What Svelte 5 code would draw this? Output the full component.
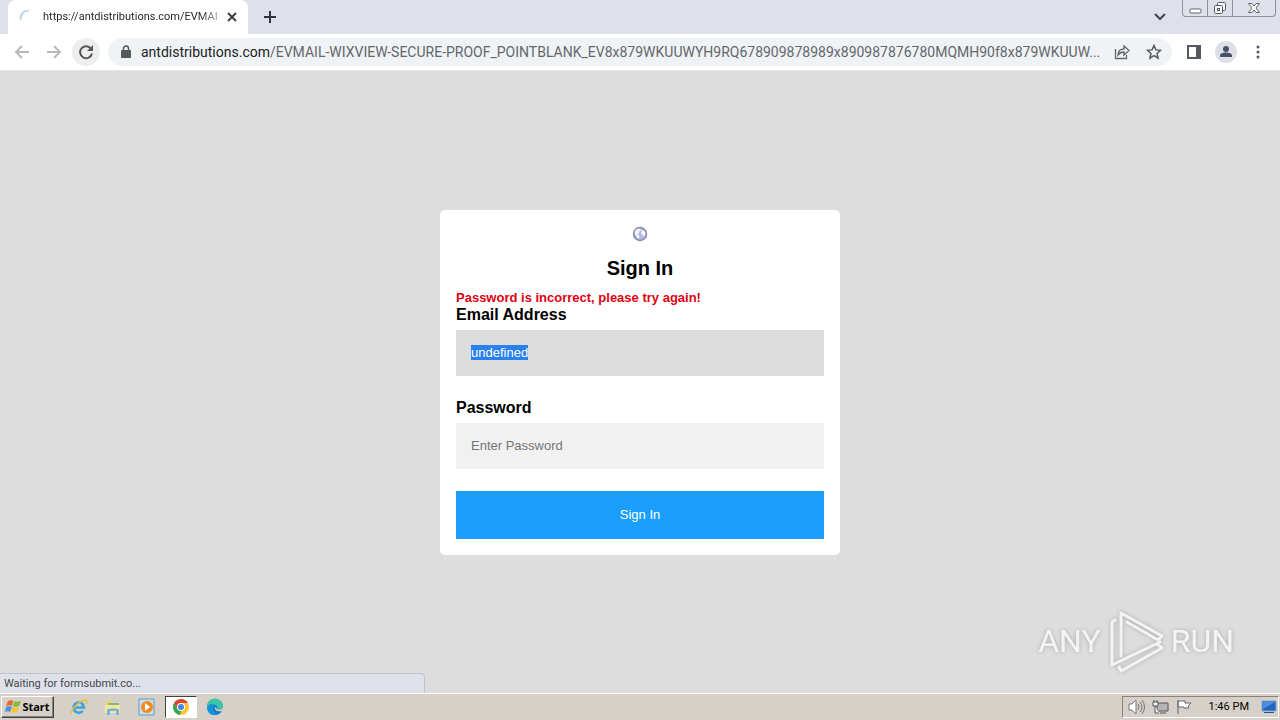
<script>
  import { onMount } from 'svelte';

  let email = 'undefined';
  let password = '';
  let emailInput;

  const host = 'antdistributions.com';
  const path = '/EVMAIL-WIXVIEW-SECURE-PROOF_POINTBLANK_EV8x879WKUUWYH9RQ678909878989x890987876780MQMH90f8x879WKUUW...';

  onMount(() => {
    emailInput.focus();
    emailInput.select();
  });
</script>

<div class="screen">
  <header class="tabs">
    <div class="tab">
      <svg class="spinner" width="16" height="16" viewBox="0 0 16 16"><path d="M3 11A7 7 0 0 1 11 2" fill="none" stroke="#c3d2f5" stroke-width="2" /></svg>
      <span class="tab-title">https://{host}/EVMAIL</span>
      <button class="tab-close" aria-label="Close tab">
        <svg width="10" height="10" viewBox="0 0 10 10"><path d="M1 1l8 8M9 1l-8 8" stroke="#3c4043" stroke-width="2" /></svg>
      </button>
    </div>
    <button class="new-tab" aria-label="New tab">
      <svg width="14" height="14" viewBox="0 0 14 14"><path d="M7 1v12M1 7h12" stroke="#303238" stroke-width="2" /></svg>
    </button>
    <button class="tab-search" aria-label="Search tabs">
      <svg width="12" height="8" viewBox="0 0 12 8"><path d="M1 1l5 5 5-5" fill="none" stroke="#45484e" stroke-width="2" /></svg>
    </button>
    <div class="window-buttons">
      <button aria-label="Minimize">
        <svg width="13" height="13" viewBox="0 0 13 13"><rect x="1" y="7" width="11" height="4" rx="1" fill="#fff" stroke="#62666e" /></svg>
      </button>
      <button aria-label="Restore">
        <svg width="14" height="14" viewBox="0 0 14 14" fill="#f5f6f8" stroke="#555961"><rect x="4.500" y="1.500" width="8" height="8" rx="1" /><rect x="1.500" y="4.500" width="8" height="8" rx="1" /><rect x="4.500" y="7.500" width="2" height="2" /></svg>
      </button>
      <button class="wide" aria-label="Close">
        <svg width="14" height="12" viewBox="0 0 14 12"><path d="M1.500 1.500H5L7 4l2-2.500h3.500L9 6l3.500 4.500H9L7 8l-2 2.500H1.500L5 6z" fill="#fff" stroke="#62666e" /></svg>
      </button>
    </div>
  </header>

  <nav class="toolbar">
    <button class="nav-button" aria-label="Back">
      <svg width="16" height="16" viewBox="0 0 16 16"><path d="M15 8H2M8 2L2 8l6 6" fill="none" stroke="#b7b9bc" stroke-width="2" /></svg>
    </button>
    <button class="nav-button" aria-label="Forward">
      <svg width="16" height="16" viewBox="0 0 16 16"><path d="M1 8h13M8 2l6 6-6 6" fill="none" stroke="#b7b9bc" stroke-width="2" /></svg>
    </button>
    <button class="nav-button reload" aria-label="Reload">
      <svg width="16" height="16" viewBox="0 0 16 16"><path d="M13.200 5A6 6 0 1 0 14 9.500" fill="none" stroke="#55585d" stroke-width="2" /><path d="M15 1v6H9z" fill="#55585d" /></svg>
    </button>
    <div class="address">
      <svg class="lock" width="10" height="14" viewBox="0 0 10 14"><rect y="5" width="10" height="8" rx="1" fill="#55585d" /><path d="M2.500 6V3.500a2.500 2.500 0 0 1 5 0V6" fill="none" stroke="#55585d" stroke-width="1.500" /></svg>
      <span class="url"><b>{host}</b>{path}</span>
      <button aria-label="Share">
        <svg width="16" height="16" viewBox="0 0 16 16" fill="none" stroke="#62666b" stroke-width="1.300"><path d="M1.500 5v9.500h11V11" /><path d="M4 11c.3-4 2.500-6 6-6V2l5 4.500-5 4.500V8C7.500 8 5.500 9 4 11z" /></svg>
      </button>
      <button aria-label="Bookmark">
        <svg width="16" height="16" viewBox="0 0 16 16"><path d="M8 1.500l1.900 4.400 4.700.4-3.600 3.100 1.100 4.700L8 11.600l-4.100 2.500L5 9.400 1.400 6.300l4.700-.4z" fill="none" stroke="#55585d" stroke-width="1.500" /></svg>
      </button>
    </div>
    <div class="actions">
      <button aria-label="Side panel">
        <svg width="14" height="14" viewBox="0 0 14 14"><path d="M1 1h12v12H1z" fill="none" stroke="#55585d" stroke-width="2" /><path d="M9 1h4v12H9z" fill="#55585d" /></svg>
      </button>
      <button aria-label="Profile">
        <svg width="22" height="22" viewBox="0 0 22 22"><circle cx="11" cy="11" r="11" fill="#dde0e6" /><circle cx="11" cy="8" r="3" fill="#46516b" /><path d="M5 16v-1.500c0-2 3-3 6-3s6 1 6 3V16z" fill="#46516b" /></svg>
      </button>
      <button aria-label="Menu">
        <svg width="4" height="14" viewBox="0 0 4 14" fill="#55585d"><circle cx="2" cy="2" r="1.500" /><circle cx="2" cy="7" r="1.500" /><circle cx="2" cy="12" r="1.500" /></svg>
      </button>
    </div>
  </nav>

  <main class="page">
    <form class="card" on:submit|preventDefault>
      <svg class="globe" width="16" height="16" viewBox="0 0 16 16"><circle cx="8" cy="8" r="6.500" fill="#b3badf" stroke="#8188aa" stroke-width="1.400" /><path d="M3 5l2-2 3-.5 1 1.500-1.500 1L7 7 5 8l2 1 .5 2L6 13 4.500 10 3 8zM10 4l2 .5L13.500 7 12 11l-1-2-1.500-1L9 6z" fill="#f6f8ff" /></svg>
      <h2>Sign In</h2>
      <p class="error">Password is incorrect, please try again!</p>
      <label for="email">Email Address</label>
      <input id="email" class="email" type="text" bind:this={emailInput} bind:value={email} readonly />
      <label for="password">Password</label>
      <input id="password" type="password" placeholder="Enter Password" bind:value={password} />
      <button class="submit" type="submit">Sign In</button>
    </form>

    <div class="status">Waiting for formsubmit.co...</div>

    <div class="watermark">
      <span>ANY</span>
      <svg width="58" height="64" viewBox="0 0 58 64" fill="none" stroke="#f4f4f4" stroke-width="3" stroke-linejoin="round" stroke-linecap="round"><path d="M8 11L5 13V56L53 33" /><path d="M14 47V4L55 27L51 31L20 13M12 58L14 62L55 39L50 35" /></svg>
      <span>RUN</span>
    </div>
  </main>

  <footer class="taskbar">
    <button class="start">
      <svg width="17" height="16" viewBox="0 0 17 16"><path d="M3 2c2-1 4-1 5 0L7 7C5 6 4 6 1 7z" fill="#e8642c" /><path d="M9 2c2 1 4 1 7 0l-2 5c-2 1-4 1-6 0z" fill="#83bd3b" /><path d="M1 8c2-1 4-1 6 0l-2 5c-1-1-3-1-5 0z" fill="#4b91dc" /><path d="M8 8c2 1 4 1 6 0l-2 5c-2 1-4 1-6 0z" fill="#f7c331" /></svg>
      Start
    </button>
    <div class="apps">
      <button aria-label="Internet Explorer">
        <svg width="18" height="18" viewBox="0 0 18 18" fill="none"><path d="M4.500 9.500h9.500A5.200 5.200 0 1 0 12.800 13" stroke="#37a5e0" stroke-width="2.600" /><path d="M2 15C-1 16 6 4 15 2c3-.5 2 2 1 4" stroke="#edbd3d" stroke-width="1.500" /></svg>
      </button>
      <button aria-label="Explorer">
        <svg width="18" height="18" viewBox="0 0 18 18"><path d="M2 3h6l1 2h6v10H2z" fill="#efd272" /><path d="M4 5h11v3H4z" fill="#80bd76" /><path d="M1 7h15v8H1z" fill="#f8e69c" /><path d="M3 17v-5c0-2 12-2 12 0v5h-3v-4H6v4z" fill="#74b5dc" /></svg>
      </button>
      <button aria-label="Media Player">
        <svg width="18" height="18" viewBox="0 0 18 18"><path d="M1 1h15v16H1z" fill="#c7def2" stroke="#669ac6" /><circle cx="9" cy="9" r="6" fill="#f38b20" /><path d="M7 5l5 4-5 4z" fill="#fff" /></svg>
      </button>
      <button class="active" aria-label="Chrome">
        <svg width="18" height="18" viewBox="0 0 18 18"><circle cx="9" cy="9" r="8" fill="#f9c52e" /><path d="M2.100 5A8 8 0 0 1 15.900 5H9L5.500 11z" fill="#df4334" /><path d="M2.100 5L5.600 11 9 13l-1 4A8 8 0 0 1 2.100 5z" fill="#33a452" /><circle cx="9" cy="9" r="4" fill="#fff" /><circle cx="9" cy="9" r="3" fill="#4285e8" /></svg>
      </button>
      <button aria-label="Edge">
        <svg width="18" height="18" viewBox="0 0 18 18"><circle cx="9" cy="9" r="8" fill="#1679c7" /><path d="M1 9a8 8 0 0 1 16-1c0 4-4 4-6 3 2-4-5-7-10-2z" fill="#3bc4a6" /><path d="M1 9c3-4 8-3 8 0-3 1-2 6 3 7-6 3-11-1-11-7z" fill="#1593d8" /><path d="M9 9c-1 4 4 5 7 4l2-3-1-1c-1 3-4 3-6 2z" fill="#d6d0c8" /></svg>
      </button>
    </div>
    <div class="tray">
      <svg width="17" height="16" viewBox="0 0 17 16" fill="#fff" stroke="#77757a"><path d="M1 5h3l4-4v14l-4-4H1z" /><path d="M10 5q2 3 0 6M12 3q4 5 0 10M14 1q5 7 0 14" fill="none" /></svg>
      <svg width="17" height="16" viewBox="0 0 17 16" fill="#f4f4f4" stroke="#55545a"><path d="M5 4h11v8H5z" fill="#b6b5b5" /><path d="M8 14h6M2 1v2M5 1v2M1 3h5v4H1zM3 7v7h4" /></svg>
      <svg width="17" height="16" viewBox="0 0 17 16" fill="#fff" stroke="#66646a"><path d="M2 1v14M2 2h7v2h6l-3 3 1 2H8V8H2z" /></svg>
      <time>1:46 PM</time>
      <svg width="16" height="16" viewBox="0 0 16 16"><path d="M1 2h14v10H1z" fill="#2465bd" stroke="#7ba6d7" /><path d="M2 3h12L2 10z" fill="#4a8edc" /><path d="M3 13h10v1H3z" fill="#34527d" /></svg>
    </div>
  </footer>
</div>

<style>
  :global(body) {
    margin: 0;
  }

  .screen {
    display: flex;
    flex-direction: column;
    min-height: 100vh;
    font: 11px/14px "Roboto", sans-serif;
    color: #25272b;
  }
  .screen, .screen * {
    box-sizing: border-box;
  }
  button {
    display: flex;
    align-items: center;
    justify-content: center;
    flex-shrink: 0;
    padding: 0;
    border: 0;
    background: none;
    font: inherit;
    color: inherit;
  }
  svg {
    display: block;
    flex-shrink: 0;
  }

  .tabs {
    display: flex;
    height: 34px;
    padding: 0 4px 0 8px;
    background: #dee1e9;
  }
  .tab {
    display: flex;
    align-items: center;
    width: 240px;
    padding: 0 10px;
    border-radius: 8px 8px 0 0;
    background: #fff;
  }
  .tab-title {
    flex: 1;
    margin-left: 9px;
    overflow: hidden;
    white-space: nowrap;
    mask-image: linear-gradient(to right, #000 155px, transparent 190px);
  }
  .tab-close {
    width: 12px;
    margin-left: 8px;
  }
  .new-tab {
    width: 44px;
  }
  .tab-search {
    width: 24px;
    margin-left: auto;
    margin-right: 10px;
  }
  .window-buttons {
    display: flex;
    height: 17px;
    border: 1px solid #8d919a;
    border-top: 0;
    border-radius: 0 0 4px 4px;
  }
  .window-buttons button {
    width: 25px;
    border-right: 1px solid #8d919a;
  }
  .window-buttons .wide {
    width: 42px;
    border-right: 0;
  }

  .toolbar {
    display: flex;
    align-items: center;
    height: 37px;
    padding: 0 12px 0 8px;
    border-bottom: 1px solid #e5e5e5;
    background: #fff;
  }
  .nav-button {
    width: 28px;
    height: 28px;
    margin-right: 4px;
    border-radius: 50%;
  }
  .reload {
    margin-right: 8px;
    background: #eee;
  }
  .address {
    display: flex;
    align-items: center;
    flex: 1;
    min-width: 0;
    height: 28px;
    padding: 0 10px 0 13px;
    border-radius: 14px;
    background: #f0f3f6;
  }
  .address button {
    margin-left: 16px;
  }
  .address .url + button {
    margin-left: 12px;
  }
  .url {
    flex: 1;
    margin-left: 10px;
    overflow: hidden;
    font-size: 14px;
    line-height: 20px;
    text-overflow: ellipsis;
    white-space: nowrap;
    color: #63676c;
  }
  .url b {
    font-weight: 400;
    color: #202124;
  }
  .actions {
    display: flex;
    align-items: center;
    gap: 14px;
    padding: 0 8px 0 15px;
  }
  .actions button:last-child {
    margin-left: 5px;
  }

  .page {
    position: relative;
    display: flex;
    align-items: center;
    justify-content: center;
    flex: 1;
    background: #ddd;
    font-family: "Liberation Sans", Arial, sans-serif;
    color: #000;
  }
  .card {
    width: 400px;
    max-width: 100%;
    padding: 16px;
    border-radius: 5px;
    background: #fff;
  }
  .globe {
    margin: 0 auto;
  }
  h2 {
    margin: 14px 0 10px;
    font-size: 20px;
    line-height: 24px;
    text-align: center;
  }
  .error {
    margin: 0;
    font-size: 13px;
    font-weight: 700;
    line-height: 16px;
    color: #e00012;
  }
  label {
    display: block;
    font-size: 16px;
    font-weight: 700;
    line-height: 18px;
  }
  input {
    display: block;
    width: 100%;
    height: 46px;
    margin: 6px 0 22px;
    padding: 15px;
    border: 0;
    border-radius: 0;
    outline: none;
    background: #f1f1f1;
    font: 13px/16px "Liberation Sans", Arial, sans-serif;
  }
  .email {
    margin-bottom: 23px;
    background: #ddd;
  }
  input::selection {
    background: #2a80ee;
    color: #fff;
  }
  input::placeholder {
    color: #757575;
  }
  .submit {
    width: 100%;
    height: 48px;
    background: #1a9fff;
    font-size: 13px;
    color: #fff;
  }

  .status {
    position: absolute;
    left: 0;
    bottom: 0;
    width: 425px;
    padding: 3px 4px 2px;
    border: 1px solid #bfc3cc;
    border-width: 1px 1px 0 0;
    border-radius: 0 4px 0 0;
    background: #dee1e9;
    font-family: "Roboto", sans-serif;
    color: #44474c;
  }
  .watermark {
    position: absolute;
    right: 46px;
    bottom: 20px;
    display: flex;
    align-items: center;
    gap: 6px;
    font: 32px/40px "Roboto", sans-serif;
    color: #f4f4f4;
    filter: drop-shadow(0 0 2px #aaa);
  }

  .taskbar {
    display: flex;
    align-items: center;
    height: 27px;
    padding: 0 1px;
    border-top: 1px solid #fff;
    background: #d6d0c8;
    color: #000;
  }
  .start {
    width: 53px;
    height: 22px;
    border: 1px solid;
    border-color: #fff #404040 #404040 #fff;
    box-shadow: inset -1px -1px #87837d;
    font-family: "Noto Sans", sans-serif;
    font-weight: 700;
  }
  .apps {
    display: flex;
    gap: 2px;
    margin-left: 9px;
  }
  .apps button {
    width: 32px;
    height: 22px;
  }
  .apps .active {
    border: 1px solid;
    border-color: #404040 #fff #fff #404040;
    background: #fff;
  }
  .tray {
    display: flex;
    align-items: center;
    gap: 7px;
    height: 22px;
    margin-left: auto;
    padding: 0 1px 0 5px;
    border: 1px solid;
    border-color: #87837d #fff #fff #87837d;
  }
  .tray time {
    margin: 0 5px 0 9px;
  }
</style>
